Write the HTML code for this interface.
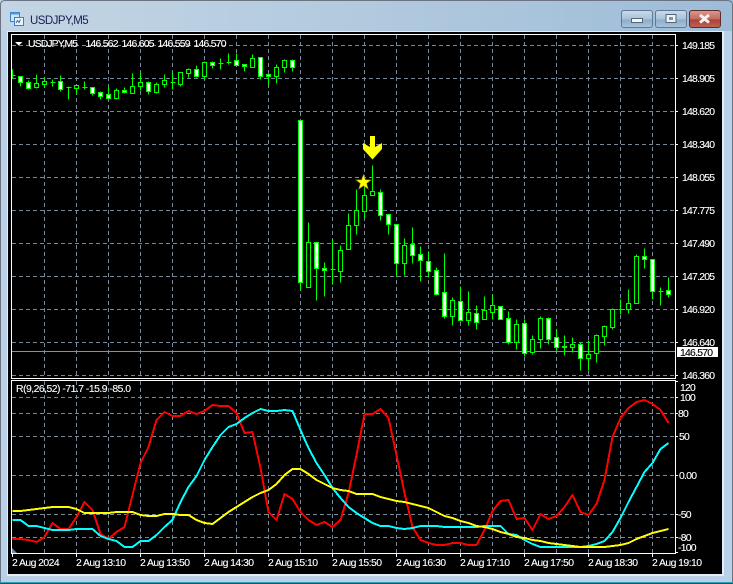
<!DOCTYPE html>
<html><head><meta charset="utf-8"><style>
html,body{margin:0;padding:0;width:733px;height:584px;overflow:hidden;background:#fff}
svg{display:block}
text{font-family:"Liberation Sans",sans-serif;font-size:10.4px;fill:#fff;stroke:#fff;stroke-width:.12px}
.p{letter-spacing:-.75px}
.t{letter-spacing:-.55px}
.s{letter-spacing:-.75px}
</style></head><body>
<svg width="733" height="584" viewBox="0 0 733 584" xmlns="http://www.w3.org/2000/svg">
<defs>
<linearGradient id="ft" x1="0" y1="0" x2="1" y2="0"><stop offset="0" stop-color="#c3d5e4"/><stop offset=".45" stop-color="#b4cbdf"/><stop offset="1" stop-color="#9dbcd8"/></linearGradient>
<linearGradient id="bt" x1="0" y1="0" x2="0" y2="1"><stop offset="0" stop-color="#c9dbea"/><stop offset=".5" stop-color="#a9c3da"/><stop offset=".55" stop-color="#8fadc8"/><stop offset="1" stop-color="#a8c5de"/></linearGradient>
<linearGradient id="cl" x1="0" y1="0" x2="0" y2="1"><stop offset="0" stop-color="#d99c90"/><stop offset=".5" stop-color="#c46a60"/><stop offset=".55" stop-color="#ad4038"/><stop offset="1" stop-color="#bd6455"/></linearGradient>
</defs>
<rect width="733" height="584" fill="#b9d1e8"/>
<rect x="0" y="0" width="733" height="31" fill="url(#ft)"/>
<path d="M.5 584V5Q.5 .5 5 .5H727Q732.500 .5 732.500 5V584" fill="none" stroke="#6b7480"/>
<rect x="0" y="582" width="733" height="1" fill="#2f9fb5"/><rect x="0" y="583" width="733" height="1" fill="#3a4a55"/>
<rect x="7" y="31" width="717" height="545" fill="#e4edf5"/>
<rect x="8" y="32" width="714" height="542" fill="#000"/>

<!-- title icon -->
<rect x="10.500" y="12.500" width="9" height="9" fill="#cfe6f8" stroke="#3f7fc0"/>
<rect x="10.500" y="12.500" width="9" height="2" fill="#4f94d8"/>
<rect x="14.500" y="17.500" width="9" height="8" fill="#e8f4fc" stroke="#3f7fc0"/>
<path d="M16 23l1.500-2.500 1.500 2 1.500-3" fill="none" stroke="#2f6fb0"/>
<text x="30" y="24" style="font-size:11.500px;fill:#1c1c50;stroke:none;letter-spacing:-.55px">USDJPY,M5</text>

<!-- buttons -->
<rect x="621.500" y="10.500" width="31" height="17" rx="2.500" fill="url(#bt)" stroke="#5f7a92"/>
<rect x="631.500" y="18.500" width="11" height="4" fill="#f4f6f8" stroke="#55657a"/>
<rect x="655.500" y="10.500" width="31" height="17" rx="2.500" fill="url(#bt)" stroke="#5f7a92"/>
<rect x="666" y="14.500" width="10" height="8" fill="#eef2f6" stroke="#55657a"/><rect x="669" y="17" width="4" height="3" fill="#7d93a8"/>
<rect x="689.500" y="10.500" width="31" height="17" rx="2.500" fill="url(#cl)" stroke="#5e2a2a"/>
<path d="M700 15l4.500 3.500 4.500-3.500M700 22.500l4.500-3.500 4.500 3.500" fill="none" stroke="#f2f2f2" stroke-width="3"/>

<!-- grid -->
<g stroke="#778899" stroke-width="1" stroke-dasharray="4 3" fill="none" shape-rendering="crispEdges">
<path d="M12 45.500H675M12 78.500H675M12 111.500H675M12 144.500H675M12 177.500H675M12 210.500H675M12 243.500H675M12 276.500H675M12 309.500H675M12 342.500H675M12 375.500H675"/>
<path d="M44.500 35V378M76.500 35V378M108.500 35V378M140.500 35V378M172.500 35V378M204.500 35V378M236.500 35V378M268.500 35V378M300.500 35V378M332.500 35V378M364.500 35V378M396.500 35V378M428.500 35V378M460.500 35V378M492.500 35V378M524.500 35V378M556.500 35V378M588.500 35V378M620.500 35V378M652.500 35V378"/>
<path d="M12 397.500H675M12 413.500H675M12 436.500H675M12 475.500H675M12 514.500H675M12 537.500H675"/>
<path d="M44.500 381V553M76.500 381V553M108.500 381V553M140.500 381V553M172.500 381V553M204.500 381V553M236.500 381V553M268.500 381V553M300.500 381V553M332.500 381V553M364.500 381V553M396.500 381V553M428.500 381V553M460.500 381V553M492.500 381V553M524.500 381V553M556.500 381V553M588.500 381V553M620.500 381V553M652.500 381V553"/>
</g>
<path d="M12 351.500H675" stroke="#8a8f96" fill="none"/>

<!-- candles -->
<g transform="translate(.5 .5)" shape-rendering="crispEdges">
<path stroke="#0f0" fill="none" d="M12 69V78M12 75h3M20 76V86M28 80V89M36 74V88M44 77V87M52 79V86M50 82h5M60 75V91M68 86V99M66 87h5M76 85V94M84 81V89M82 87h5M92 87V95M100 91V99M108 86V99M116 88V99M124 87V93M132 73V93M140 72V90M148 81V94M156 82V93M164 74V87M172 72V89M170 82h5M180 72V86M188 68V77M196 65V77M204 61V79M212 61V68M220 58V69M218 63h5M228 53V64M226 62h5M236 53V65M244 64V71M252 54V67M260 57V79M268 74V85M276 64V83M284 59V72M292 59V71M300 120V290M308 222V287M316 242V300M324 262V296M332 239V284M330 269h5M340 245V282M348 213V249M356 189V234M364 183V218M372 165V195M380 189V220M388 214V234M396 224V276M404 238V275M412 227V263M420 246V281M428 251V277M436 267V295M444 253V318M452 297V325M460 286V321M468 291V325M476 305V329M484 296V319M492 294V319M500 306V319M508 311V344M516 319V349M524 319V356M532 335V354M540 316V348M548 317V344M556 329V350M564 335V355M572 337V352M580 342V370M588 340V370M596 334V362M604 325V345M612 308V329M620 299V314M618 309h5M628 289V313M636 254V303M644 248V268M652 259V299M660 287V305M658 291h5M668 277V297"/>
<path stroke="#0f0" fill="#000" d="M34 83h4v4h-4zM42 81h4v3h-4zM74 85h4v3h-4zM114 90h4v8h-4zM130 86h4v7h-4zM138 82h4v4h-4zM154 84h4v8h-4zM162 80h4v4h-4zM178 72h4v12h-4zM186 69h4v4h-4zM202 62h4v14h-4zM250 58h4v9h-4zM274 67h4v9h-4zM282 60h4v7h-4zM306 242h4v45h-4zM338 250h4v21h-4zM346 225h4v24h-4zM354 210h4v15h-4zM362 195h4v16h-4zM370 191h4v4h-4zM402 245h4v18h-4zM450 300h4v16h-4zM466 312h4v8h-4zM482 310h4v9h-4zM490 305h4v7h-4zM514 324h4v18h-4zM530 339h4v13h-4zM538 318h4v21h-4zM570 344h4v3h-4zM586 354h4v4h-4zM594 335h4v18h-4zM602 326h4v10h-4zM610 309h4v18h-4zM626 303h4v6h-4zM634 256h4v47h-4z"/>
<path stroke="#0f0" fill="#fff" d="M18 76h4v6h-4zM26 82h4v6h-4zM58 81h4v8h-4zM90 87h4v6h-4zM98 92h4v4h-4zM106 94h4v4h-4zM122 90h4v2h-4zM146 82h4v9h-4zM194 69h4v7h-4zM210 62h4v3h-4zM234 60h4v5h-4zM242 64h4v2h-4zM258 57h4v19h-4zM266 74h4v2h-4zM290 60h4v7h-4zM298 120h4v162h-4zM314 242h4v26h-4zM322 268h4v2h-4zM378 192h4v23h-4zM386 214h4v10h-4zM394 224h4v39h-4zM410 244h4v11h-4zM418 254h4v6h-4zM426 261h4v10h-4zM434 270h4v24h-4zM442 292h4v24h-4zM458 301h4v19h-4zM474 313h4v9h-4zM498 306h4v13h-4zM506 318h4v24h-4zM522 323h4v30h-4zM546 318h4v21h-4zM554 337h4v10h-4zM562 346h4v1h-4zM578 344h4v14h-4zM642 256h4v3h-4zM650 259h4v32h-4zM666 290h4v4h-4z"/>
</g>

<!-- arrow and star -->
<polygon points="370,136 375,136 375,147 382,143 382,149 372.500,159.500 363,149 363,143 370,147" fill="#ff0"/>
<polygon points="363.500,174.500 365.400,179.800 371,180 366.600,183.400 368.200,189 363.500,185.700 358.800,189 360.400,183.400 356,180 361.600,179.800" fill="#ff0" stroke="#a68a00" stroke-width=".6"/>

<!-- indicator lines -->
<g fill="none" stroke-width="2" stroke-linejoin="round" shape-rendering="crispEdges">
<polyline stroke="#f00" points="12.500,539 20.500,539 28.500,540 36.500,542 44.500,537 52.500,523 60.500,529 68.500,529 76.500,517 84.500,502 92.500,510 100.500,534 108.500,539 116.500,532 124.500,527 132.500,495 140.500,463 148.500,447 156.500,420 164.500,412 172.500,416 180.500,416 188.500,411 196.500,414 204.500,411 212.500,405 220.500,406 228.500,406 236.500,413 244.500,433 252.500,432 260.500,468 268.500,512 276.500,520 284.500,494 292.500,499 300.500,512 308.500,520 316.500,525 324.500,522 332.500,527 340.500,520 348.500,493 356.500,455 364.500,414 372.500,414 380.500,409 388.500,418 396.500,455 404.500,493 412.500,527 420.500,540 428.500,543 436.500,545 444.500,545 452.500,543 460.500,543 468.500,545 476.500,545 484.500,530 492.500,511 500.500,501 508.500,500 516.500,519 524.500,518 532.500,530 540.500,514 548.500,519 556.500,516 564.500,507 572.500,495 580.500,512 588.500,515 596.500,504 604.500,480 612.500,437 620.500,418 628.500,408 636.500,402 644.500,400 652.500,404 660.500,410 668.500,423"/>
<polyline stroke="#0ff" points="12.500,520 20.500,520 28.500,526 36.500,526 44.500,528 52.500,530 60.500,530 68.500,530 76.500,529 84.500,529 92.500,529 100.500,536 108.500,539 116.500,541 124.500,547 132.500,547 140.500,541 148.500,541 156.500,535 164.500,527 172.500,520 180.500,502 188.500,487 196.500,476 204.500,460 212.500,447 220.500,435 228.500,427 236.500,424 244.500,418 252.500,413 260.500,409 268.500,411 276.500,411 284.500,410 292.500,411 300.500,430 308.500,448 316.500,463 324.500,475 332.500,488 340.500,498 348.500,507 356.500,513 364.500,518 372.500,523 380.500,526 388.500,526 396.500,528 404.500,529 412.500,528 420.500,526 428.500,526 436.500,526 444.500,527 452.500,527 460.500,527 468.500,527 476.500,527 484.500,526 492.500,526 500.500,526 508.500,534 516.500,535 524.500,540 532.500,544 540.500,547 548.500,547 556.500,547 564.500,547 572.500,547 580.500,547 588.500,546 596.500,544 604.500,541 612.500,532 620.500,518 628.500,502 636.500,487 644.500,472 652.500,463 660.500,449 668.500,443"/>
<polyline stroke="#ff0" points="12.500,511 20.500,511 28.500,510 36.500,509 44.500,508 52.500,507 60.500,507 68.500,507 76.500,509 84.500,513 92.500,513 100.500,513 108.500,513 116.500,512 124.500,512 132.500,512 140.500,515 148.500,516 156.500,516 164.500,514 172.500,514 180.500,515 188.500,515 196.500,520 204.500,523 212.500,524 220.500,518 228.500,512 236.500,507 244.500,502 252.500,497 260.500,493 268.500,490 276.500,484 284.500,475 292.500,469 300.500,469 308.500,474 316.500,480 324.500,484 332.500,488 340.500,490 348.500,491 356.500,494 364.500,494 372.500,494 380.500,497 388.500,499 396.500,501 404.500,502 412.500,504 420.500,506 428.500,508 436.500,512 444.500,516 452.500,518 460.500,521 468.500,523 476.500,526 484.500,527 492.500,529 500.500,532 508.500,534 516.500,537 524.500,538 532.500,540 540.500,541 548.500,543 556.500,544 564.500,545 572.500,546 580.500,547 588.500,547 596.500,547 604.500,547 612.500,546 620.500,545 628.500,543 636.500,539 644.500,536 652.500,533 660.500,531 668.500,529"/>
</g>

<polygon points="12,548 17,553 12,553" fill="#778899"/>

<!-- frames and ticks -->
<g fill="none" stroke="#fff" shape-rendering="crispEdges">
<path d="M11.500 34.500H675.500V378.500H11.500Z"/>
<path d="M11.500 380.500H675.500V553.500H11.500Z"/>
<path d="M675 45.500h3M675 78.500h3M675 111.500h3M675 144.500h3M675 177.500h3M675 210.500h3M675 243.500h3M675 276.500h3M675 309.500h3M675 342.500h3M675 375.500h3"/>
<path d="M675 381.500h3M675 397.500h3M675 413.500h3M675 436.500h3M675 475.500h3M675 514.500h3M675 537.500h3M675 552.500h3"/>
<path d="M12.500 553v4M76.500 553v4M140.500 553v4M204.500 553v4M268.500 553v4M332.500 553v4M396.500 553v4M460.500 553v4M524.500 553v4M588.500 553v4M652.500 553v4"/>
</g>

<!-- top labels -->
<polygon points="15,42 22.500,42 18.750,45.500" fill="#fff"/>
<text x="28" y="47" textLength="50" lengthAdjust="spacing">USDJPY,M5</text>
<text x="85.500" y="47" class="p">146.562</text>
<text x="121.500" y="47" class="p">146.605</text>
<text x="157.500" y="47" class="p">146.559</text>
<text x="193.500" y="47" class="p">146.570</text>
<text x="16" y="392" textLength="115" lengthAdjust="spacing">R(9,26,52) -71.7 -15.9 -85.0</text>

<!-- price axis -->
<text x="682" y="49" class="p">149.185</text>
<text x="682" y="82" class="p">148.905</text>
<text x="682" y="115" class="p">148.620</text>
<text x="682" y="148" class="p">148.340</text>
<text x="682" y="181" class="p">148.055</text>
<text x="682" y="214" class="p">147.775</text>
<text x="682" y="247" class="p">147.490</text>
<text x="682" y="280" class="p">147.205</text>
<text x="682" y="313" class="p">146.920</text>
<text x="682" y="346" class="p">146.640</text>
<text x="682" y="379" class="p">146.360</text>
<rect x="677" y="347" width="41" height="10" fill="#fff"/>
<text x="680" y="356" class="p" style="fill:#000;stroke:#000">146.570</text>

<!-- indicator axis -->
<text x="680" y="391" class="s">120</text>
<text x="680" y="401" class="s">100</text>
<text x="678" y="417" class="s">80</text>
<text x="679" y="440" class="s">50</text>
<text x="679" y="479" class="s">0.00</text>
<text x="678" y="518" class="s">-50</text>
<text x="678" y="541" class="s">-80</text>
<text x="678" y="551" class="s">-100</text>

<!-- time axis -->
<text x="12" y="566" class="t">2 Aug 2024</text>
<text x="76" y="566" class="t">2 Aug 13:10</text>
<text x="140" y="566" class="t">2 Aug 13:50</text>
<text x="204" y="566" class="t">2 Aug 14:30</text>
<text x="268" y="566" class="t">2 Aug 15:10</text>
<text x="332" y="566" class="t">2 Aug 15:50</text>
<text x="396" y="566" class="t">2 Aug 16:30</text>
<text x="460" y="566" class="t">2 Aug 17:10</text>
<text x="524" y="566" class="t">2 Aug 17:50</text>
<text x="588" y="566" class="t">2 Aug 18:30</text>
<text x="652" y="566" class="t">2 Aug 19:10</text>
</svg>
</body></html>
